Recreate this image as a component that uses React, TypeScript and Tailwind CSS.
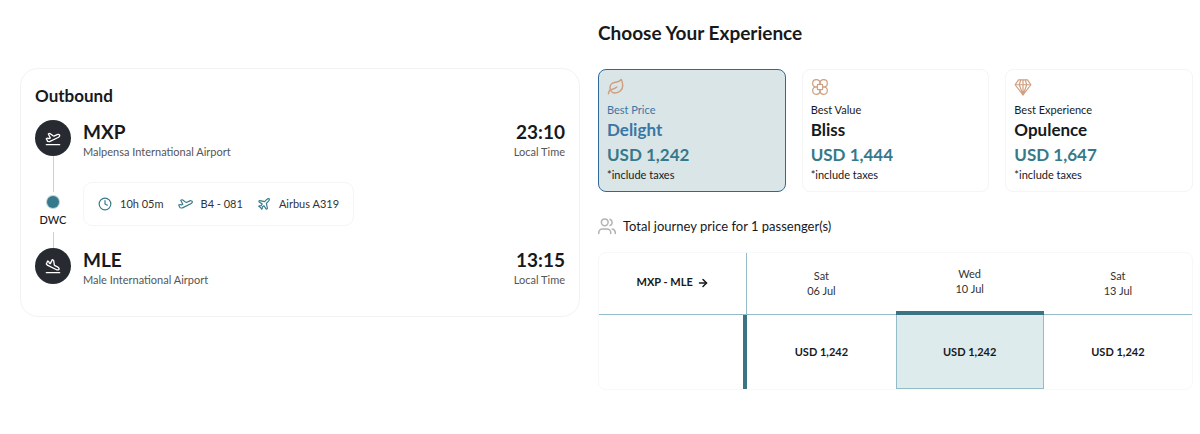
import type { ReactNode } from 'react'
import { ArrowRight, Clock, Leaf, Plane, PlaneLanding, PlaneTakeoff } from 'lucide-react'

type Fare = {
  id: string
  tag: string
  name: string
  price: string
  icon: ReactNode
}

function BlossomIcon() {
  return (
    <svg
      viewBox="0 0 24 24"
      className="size-[18px]"
      fill="none"
      stroke="currentColor"
      strokeWidth="1.6"
      strokeLinejoin="round"
    >
      <path d="M12 8.500V6.500A4.900 4.900 0 1 0 6.500 12h2" />
      <path d="M12 8.500V6.500A4.900 4.900 0 1 1 17.500 12h-2" />
      <path d="M12 15.500v2A4.900 4.900 0 1 1 6.500 12h2" />
      <path d="M12 15.500v2A4.900 4.900 0 1 0 17.500 12h-2" />
      <rect x="8.500" y="8.500" width="7" height="7" rx="1" />
    </svg>
  )
}

function DiamondIcon() {
  return (
    <svg
      viewBox="0 0 24 24"
      className="size-[18px]"
      fill="none"
      stroke="currentColor"
      strokeWidth="1.6"
      strokeLinejoin="round"
    >
      <path d="M6 2.500h12l4.500 6.500L12 22.500 1.500 9z" />
      <path d="M1.500 9h21M12 2.500v20M9 2.500L7 9l5 13.500L17 9l-2-6.500" />
    </svg>
  )
}

function PassengersIcon() {
  return (
    <svg
      viewBox="0 0 24 24"
      className="size-[18px] text-[#b3b3b3]"
      fill="none"
      stroke="currentColor"
      strokeWidth="2"
      strokeLinecap="round"
    >
      <circle cx="9" cy="7" r="4.500" />
      <path d="M16 3a4.500 4.500 0 0 1 0 8.400" />
      <path d="M1 22v-1a5 5 0 0 1 5-5h6a5 5 0 0 1 5 5v1" />
      <path d="M19 16a5 5 0 0 1 4 5v1" />
    </svg>
  )
}

function FlightIcon() {
  return (
    <svg
      viewBox="1 3 22 17"
      className="h-3 w-[15px] text-[#35798a]"
      fill="none"
      stroke="currentColor"
      strokeWidth="1.7"
      strokeLinejoin="round"
    >
      <path d="M6.360 17.400 4 17l-2-4 1.100-.55a2 2 0 0 1 1.800 0l.17.1a2 2 0 0 0 1.800 0L8 12 5 6l.9-.45a2 2 0 0 1 2.090.2l4.020 3a2 2 0 0 0 2.100.2l4.190-2.060a2.410 2.410 0 0 1 1.730-.17L21 7a1.400 1.400 0 0 1 .87 1.990l-.38.76c-.23.46-.6.84-1.070 1.080L7.580 17.200a2 2 0 0 1-1.220.18Z" />
    </svg>
  )
}

const FARES: Fare[] = [
  {
    id: 'delight',
    tag: 'Best Price',
    name: 'Delight',
    price: 'USD 1,242',
    icon: <Leaf className="size-[18px]" strokeWidth={2} />,
  },
  { id: 'bliss', tag: 'Best Value', name: 'Bliss', price: 'USD 1,444', icon: <BlossomIcon /> },
  { id: 'opulence', tag: 'Best Experience', name: 'Opulence', price: 'USD 1,647', icon: <DiamondIcon /> },
]

const DATES = [
  { day: 'Sat', date: '06 Jul', price: 'USD 1,242' },
  { day: 'Wed', date: '10 Jul', price: 'USD 1,242' },
  { day: 'Sat', date: '13 Jul', price: 'USD 1,242' },
]

function Stop({ code, airport, time }: { code: string; airport: string; time: string }) {
  return (
    <div className="flex justify-between">
      <div>
        <p className="text-[19px] leading-6 font-bold">{code}</p>
        <p className="text-[11px] leading-4 text-[#555]">{airport}</p>
      </div>
      <div className="text-right">
        <p className="text-[19px] leading-6 font-bold">{time}</p>
        <p className="text-[11px] leading-4 text-[#555]">Local Time</p>
      </div>
    </div>
  )
}

function Outbound() {
  return (
    <section className="rounded-[18px] border border-[#f2f2f2] px-3.5 pt-[15px] pb-7">
      <h2 className="text-[17px] leading-6 font-bold">Outbound</h2>
      <div className="mt-3 flex gap-3">
        {/* Route line */}
        <div className="flex w-9 shrink-0 flex-col items-center">
          <span className="flex size-9 items-center justify-center rounded-full bg-[#272a31] text-white">
            <PlaneTakeoff className="size-4" strokeWidth={2} />
          </span>
          <span className="h-9 w-px bg-[#cfcfcf]" />
          <span className="my-1 size-3 rounded-full bg-[#35798a] ring-1 ring-[#b8d2d9]" />
          <span className="text-[11px] leading-4 font-medium">DWC</span>
          <span className="mt-1 h-4 w-px bg-[#cfcfcf]" />
          <span className="flex size-9 items-center justify-center rounded-full bg-[#272a31] text-white">
            <PlaneLanding className="size-4" strokeWidth={2} />
          </span>
        </div>

        <div className="flex grow flex-col gap-[22px]">
          <Stop code="MXP" airport="Malpensa International Airport" time="23:10" />
          <div className="flex h-11 items-center gap-3.5 self-start rounded-[9px] border border-[#f5f5f5] px-3.5 text-[11px] text-[#333]">
            <span className="flex items-center gap-2">
              <Clock className="size-3.5 text-[#35798a]" strokeWidth={2} />
              10h 05m
            </span>
            <span className="flex items-center gap-2">
              <FlightIcon />
              B4 - 081
            </span>
            <span className="flex items-center gap-2">
              <Plane className="size-3.5 text-[#35798a]" strokeWidth={2} />
              Airbus A319
            </span>
          </div>
          <Stop code="MLE" airport="Male International Airport" time="13:15" />
        </div>
      </div>
    </section>
  )
}

function FareCard({ fare, selected }: { fare: Fare; selected: boolean }) {
  return (
    <button
      type="button"
      aria-pressed={selected}
      className={
        selected
          ? 'rounded-lg border border-[#2f6898] bg-[#dae5e7] px-2 pt-2 pb-2 text-left'
          : 'rounded-lg border border-[#f5f5f5] bg-white px-2 pt-2 pb-2 text-left'
      }
    >
      <span className="block text-[#cf9f80]">{fare.icon}</span>
      <span
        className={
          selected ? 'mt-1.5 block text-[11px] leading-4 text-[#3a76a3]' : 'mt-1.5 block text-[11px] leading-4'
        }
      >
        {fare.tag}
      </span>
      <span
        className={
          selected
            ? 'block text-[17px] leading-[23px] font-bold text-[#3a76a3]'
            : 'block text-[17px] leading-[23px] font-bold'
        }
      >
        {fare.name}
      </span>
      <span className="mt-0.5 block text-[17px] leading-6 font-bold text-[#35798a]">{fare.price}</span>
      <span className="block text-[11px] leading-4">*include taxes</span>
    </button>
  )
}

function DateTable() {
  return (
    <table className="mt-4 w-full table-fixed border-separate border-spacing-0 rounded-lg border border-[#f8f8f8] text-center">
      <thead>
        <tr className="h-[62px]">
          <th scope="col" className="border-r border-b border-[#94bcc8] pb-0.5 text-[11px] font-bold">
            <span className="flex items-center justify-center gap-1">
              MXP - MLE <ArrowRight className="size-3" strokeWidth={3} />
            </span>
          </th>
          {DATES.map((d, i) => (
            <th
              key={d.date}
              scope="col"
              className={
                i === 1
                  ? 'border-b-4 border-[#3a7485] pb-0.5 text-[11px] leading-[15px] font-normal text-[#333]'
                  : 'border-b border-[#94bcc8] pb-0.5 text-[11px] leading-[15px] font-normal text-[#333]'
              }
            >
              {d.day}
              <br />
              {d.date}
            </th>
          ))}
        </tr>
      </thead>
      <tbody>
        <tr className="h-[74px]">
          <td className="border-r-4 border-[#3a7485]" />
          {DATES.map((d, i) => (
            <td
              key={d.date}
              className={i === 1 ? 'border-x border-b border-[#94bcc8] bg-[#deebec] pb-1' : 'pb-1'}
            >
              <button type="button" className="text-[11px] font-bold">
                {d.price}
              </button>
            </td>
          ))}
        </tr>
      </tbody>
    </table>
  )
}

export default function App() {
  return (
    <main className="grid grid-cols-[560fr_595fr] items-start gap-[18px] bg-white pt-[21px] pr-[7px] pb-11 pl-5 font-['Lato','Liberation_Sans',sans-serif] text-[#17191c]">
      <div className="pt-[47px]">
        <Outbound />
      </div>
      <section>
        <h1 className="text-[19px] leading-6 font-bold">Choose Your Experience</h1>
        <div className="mt-6 grid grid-cols-3 gap-4">
          {FARES.map((fare, i) => (
            <FareCard key={fare.id} fare={fare} selected={i === 0} />
          ))}
        </div>
        <p className="mt-6 flex items-center gap-[7px] text-[13px] leading-5">
          <PassengersIcon />
          Total journey price for 1 passenger(s)
        </p>
        <DateTable />
      </section>
    </main>
  )
}
